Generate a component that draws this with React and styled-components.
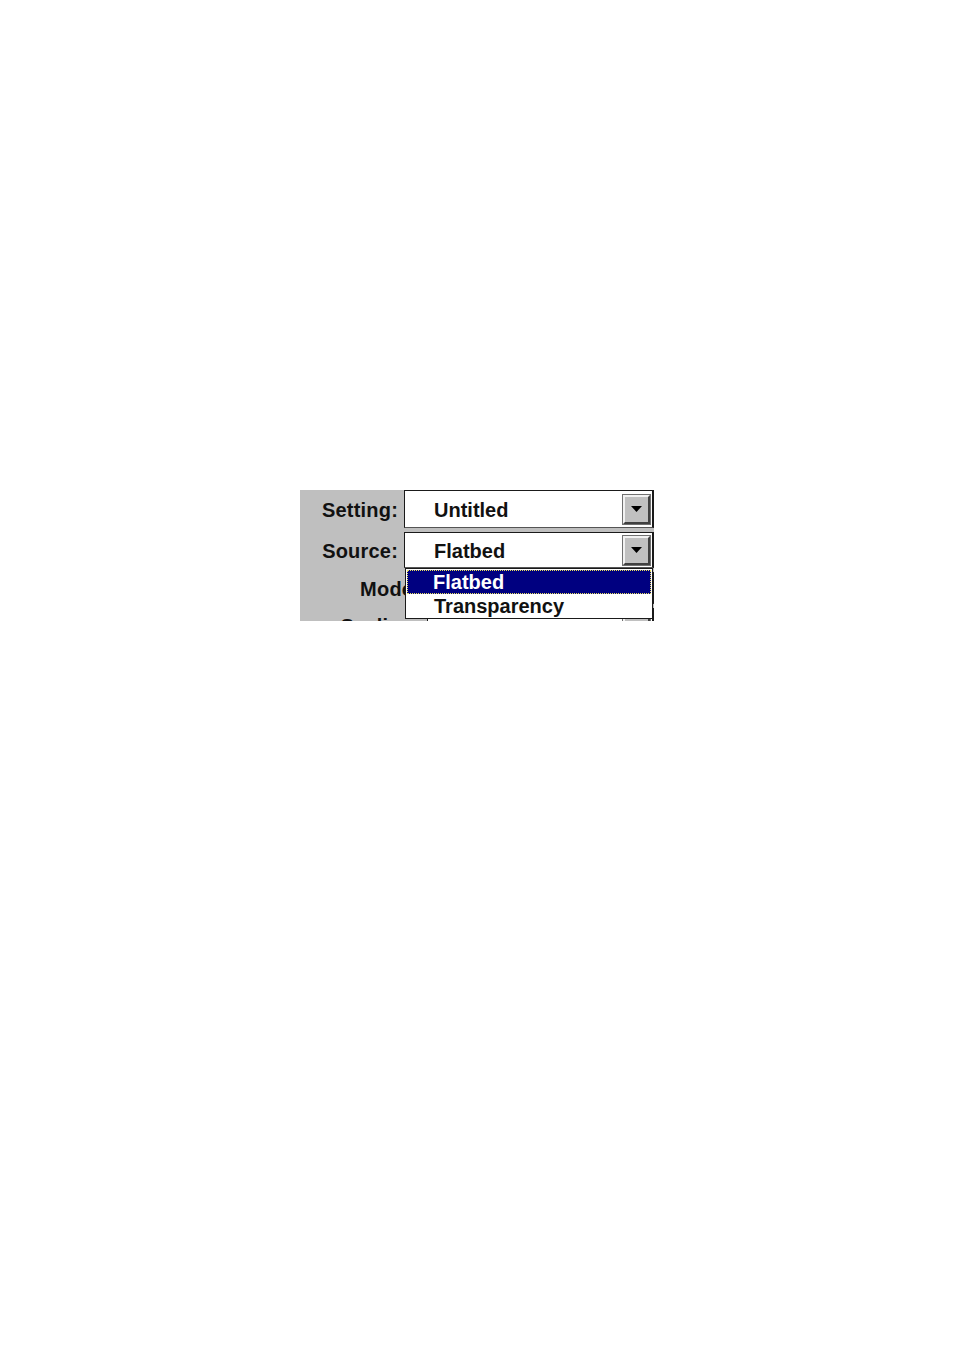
import React from 'react';
import styled, { createGlobalStyle } from 'styled-components';

const GlobalStyle = createGlobalStyle`
  html, body {
    margin: 0;
    background: #ffffff;
  }
  body {
    font-family: "Liberation Sans", Arial, sans-serif;
  }
`;

const Page = styled.div`
  width: 954px;
  height: 1354px;
  padding: 490px 0 0 300px;
  box-sizing: border-box;
`;

const Panel = styled.div`
  position: relative;
  width: 354px;
  height: 131px;
  overflow: hidden;
  background: #bfbfbf;
  display: flex;
  flex-direction: column;
  gap: 4px;
`;

const Row = styled.div`
  display: flex;
  align-items: center;
  height: ${p => p.$h}px;
  flex-shrink: 0;
`;

const Label = styled.div`
  width: ${p => p.$w}px;
  padding-right: ${p => p.$pad}px;
  padding-top: 2px;
  box-sizing: border-box;
  text-align: right;
  font-size: 20px;
  font-weight: bold;
  color: #111;
  letter-spacing: 0.2px;
`;

const Combo = styled.div`
  flex: 1;
  height: 100%;
  box-sizing: border-box;
  background: #ffffff;
  border: 1px solid #1a1a1a;
  border-right-width: 2px;
  border-bottom-color: #555;
  display: flex;
  align-items: center;
  padding-left: 29px;
  padding-right: 2px;
  font-size: 20px;
  font-weight: bold;
  color: #111;
`;

const ComboText = styled.span`
  flex: 1;
  padding-top: 2px;
`;

const DropButton = styled.div`
  width: 27px;
  height: 29px;
  box-sizing: border-box;
  background: #c0c0c0;
  border-top: 2px solid #f2f2f2;
  border-left: 2px solid #f2f2f2;
  border-right: 2px solid #404040;
  border-bottom: 2px solid #404040;
  outline: 1px solid #707070;
  display: flex;
  align-items: center;
  justify-content: center;
`;

const Arrow = () => (
  <svg width="11" height="6" viewBox="0 0 11 6">
    <path d="M0 0 H11 L5.5 6 Z" fill="#000" />
  </svg>
);

const List = styled.div`
  position: absolute;
  left: 105px;
  top: 78px;
  width: 248px;
  height: 51px;
  box-sizing: border-box;
  background: #ffffff;
  border: 1px solid #1a1a1a;
  padding: 1px;
`;

const Item = styled.div`
  height: 24px;
  box-sizing: border-box;
  display: flex;
  align-items: center;
  padding-left: ${p => (p.$selected ? 25 : 27)}px;
  font-size: 20px;
  font-weight: bold;
  color: ${p => (p.$selected ? '#ffffff' : '#111')};
  background: ${p => (p.$selected ? '#000080' : 'transparent')};
  border: ${p => (p.$selected ? '1px dotted #e8e060' : 'none')};
`;

const fields = [
  { label: 'Setting:', value: 'Untitled', h: 38, lw: 104, pad: 6 },
  { label: 'Source:', value: 'Flatbed', h: 36, lw: 104, pad: 6 },
  { label: 'Mode:', value: 'Color', h: 32, lw: 127, pad: 7 },
  { label: 'Scaling:', value: '', h: 34, lw: 127, pad: 7 },
];

export default function App() {
  return (
    <>
      <GlobalStyle />
      <Page>
        <Panel>
          {fields.map(f => (
            <Row key={f.label} $h={f.h}>
              <Label $w={f.lw} $pad={f.pad}>{f.label}</Label>
              <Combo>
                <ComboText>{f.value}</ComboText>
                <DropButton><Arrow /></DropButton>
              </Combo>
            </Row>
          ))}
          <List>
            <Item $selected>Flatbed</Item>
            <Item>Transparency</Item>
          </List>
        </Panel>
      </Page>
    </>
  );
}
